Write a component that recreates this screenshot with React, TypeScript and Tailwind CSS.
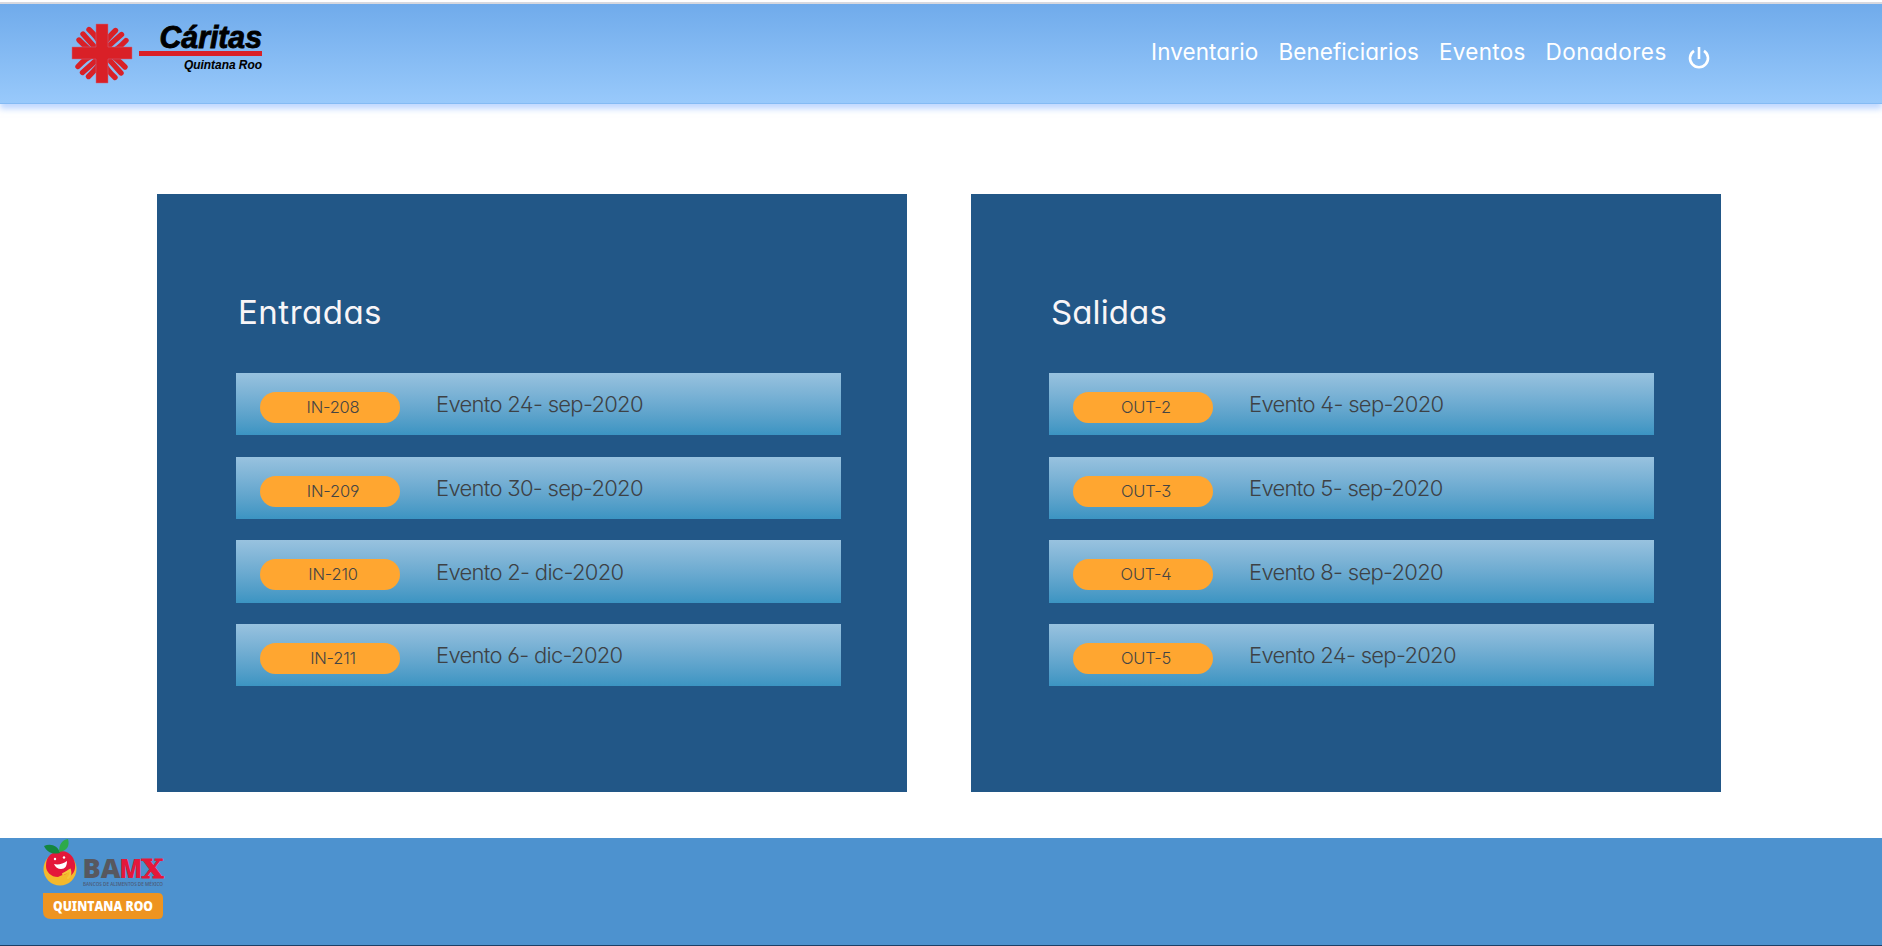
import React from "react";

const uiFont = "font-[Inter,'Open_Sans',sans-serif] [font-feature-settings:'cv11','ss01']";

function CaritasLogo() {
  const arms = [0, 90, 180, 270];
  return (
    <svg className="overflow-visible" width="192" height="60" viewBox="72 24 192 60" aria-label="Cáritas">
      {arms.map((a) => (
        <g key={a} transform={`rotate(${a} 102 53.5)`} fill="none" stroke="#d92027" strokeWidth="5.400" strokeLinecap="round">
          <path d="M106 41Q108 38 115.500 30.500" />
          <path d="M107 47.500Q113 42 121.500 34.500" />
          <path d="M112 51Q117 50 126 40.500" />
        </g>
      ))}
      <path d="M96 24h12v23h24v12h-24v24h-12v-24h-24v-12h24z" fill="#d92027" stroke="#c46b86" strokeWidth="0.500" />
      <path d="M139 51h123v5h-123z" fill="#d92027" />
      <text x="159.500" y="47.600" fontFamily="Liberation Sans" fontSize="31" fontWeight="700" fontStyle="italic" textLength="102.500" lengthAdjust="spacingAndGlyphs" stroke="#000" strokeWidth="0.900">Cáritas</text>
      <text x="184" y="69" fontFamily="Liberation Sans" fontSize="13.500" fontWeight="700" fontStyle="italic" textLength="78" lengthAdjust="spacingAndGlyphs" stroke="#000" strokeWidth="0.100">Quintana Roo</text>
    </svg>
  );
}

function BamxLogo() {
  return (
    <svg className="overflow-visible" width="122" height="82" viewBox="42 838 122 82" aria-label="BAMX">
      <circle cx="60" cy="869" r="16.500" fill="#f4b92c" />
      <path d="M50 855c7-6 20-6 24 5 3 8 0 14-5 17 2-3 2-6 1-8-2 1-3 3-4 5-4 1-6 2-8 3-7 0-12-5-12-11 0-5 1-8 4-11z" fill="#e4173a" />
      <path d="M63 874c3-1 5-3 7-4 1 3 0 6-2 8" fill="none" stroke="#f4c63a" strokeWidth="2" strokeLinecap="round" />
      <path d="M60 853c-8 2-13-1-16-7 6-3 14-1 16 7z" fill="#14863f" />
      <path d="M59 852c0-8 3-12 9-13 2 7-1 12-9 13z" fill="#2daa4a" />
      <path d="M54 864c4 1 9 0 13-3 0 5-2 8-6 8-3 0-6-2-7-5z" fill="#fff" />
      <circle cx="55" cy="859" r="1.200" fill="#fff" />
      <circle cx="64" cy="857.500" r="1.200" fill="#fff" />
      <text x="82.500" y="878" fontFamily="Open Sans" fontSize="27" fontWeight="800" textLength="38" lengthAdjust="spacingAndGlyphs" fill="#57585f">BA</text>
      <text x="119.500" y="878" fontFamily="Open Sans" fontSize="27" fontWeight="800" textLength="22.500" lengthAdjust="spacingAndGlyphs" fill="#e4173a">M</text>
      <text x="141.500" y="878" fontFamily="DejaVu Serif" fontSize="26.500" fontWeight="700" textLength="22" lengthAdjust="spacingAndGlyphs" fill="#e4173a" stroke="#e4173a" strokeWidth="0.900">X</text>
      <text x="83" y="886" fontFamily="Open Sans" fontSize="5" fontWeight="600" textLength="80" lengthAdjust="spacingAndGlyphs" fill="#4c5b78">BANCOS DE ALIMENTOS DE MÉXICO</text>
      <path d="M43 893h115q5 0 5 5v16q0 5-5 5h-107q-8 0-8-8z" fill="#ee9420" />
      <text x="53" y="911" fontFamily="Open Sans" fontSize="14" fontWeight="800" textLength="100" lengthAdjust="spacingAndGlyphs" fill="#fff">QUINTANA ROO</text>
    </svg>
  );
}

function PowerIcon() {
  return (
    <svg width="22" height="22" viewBox="0 0 22 22" fill="none" stroke="#fff" strokeWidth="2.600">
      <path d="M6 3.800a9 9 0 1 0 10 0M11 0v12" />
    </svg>
  );
}

type Entry = { code: string; label: string };

const entradas: Entry[] = [
  { code: "IN-208", label: "Evento 24- sep-2020" },
  { code: "IN-209", label: "Evento 30- sep-2020" },
  { code: "IN-210", label: "Evento 2- dic-2020" },
  { code: "IN-211", label: "Evento 6- dic-2020" },
];

const salidas: Entry[] = [
  { code: "OUT-2", label: "Evento 4- sep-2020" },
  { code: "OUT-3", label: "Evento 5- sep-2020" },
  { code: "OUT-4", label: "Evento 8- sep-2020" },
  { code: "OUT-5", label: "Evento 24- sep-2020" },
];

function Panel({ title, items, inset, heading }: { title: string; items: Entry[]; inset: string; heading: string }) {
  return (
    <section className={`h-[598px] w-[750px] bg-[#225787] pt-[94px] ${inset}`}>
      <h2 className={`pl-[2px] text-[33px] leading-[48px] text-[#f8f5f7] ${heading}`}>{title}</h2>
      <ul className="mt-[37px] flex w-[605px] flex-col gap-[21.2px]">
        {items.map((item) => (
          <li key={item.code} className="flex h-[62.48px] items-start bg-linear-to-b from-[#98c2df] to-[#3b94c2] pl-6">
            <span className="mt-[19px] h-[31px] w-[140px] rounded-[15.5px] bg-[#ffa630] pl-[6px] text-center text-[16.5px] font-light leading-[31.4px] tracking-[-0.2px] text-[#444]">{item.code}</span>
            <span className="ml-[36px] mt-[16.2px] text-[22px] font-light leading-[31px] tracking-[-0.7px] text-[#3d4145]">{item.label}</span>
          </li>
        ))}
      </ul>
    </section>
  );
}

export default function App() {
  return (
    <div className={`flex h-[946px] flex-col overflow-hidden bg-white ${uiFont}`}>
      <div className="mt-[2px] h-[2px] shrink-0 bg-[#d9d9df]" />
      <header className="flex h-[100px] shrink-0 items-start justify-between border-b border-[#84bbf4] bg-linear-to-b from-[#70abeb] to-[#98c9fb] pl-[72px] pr-[172px] pt-[20px] shadow-[0_5px_6px_rgba(150,190,255,0.6)]">
        <CaritasLogo />
        <nav className="flex items-start text-[22.5px] leading-[32px] text-white">
          <a className="mt-[12px] w-[127.5px] tracking-[0.1px]">Inventario</a>
          <a className="mt-[12px] w-[160.5px] tracking-[0.05px]">Beneficiarios</a>
          <a className="mt-[12px] w-[106.5px] tracking-[0.3px]">Eventos</a>
          <a className="mt-[12px] w-[142.5px] tracking-[0.45px]">Donadores</a>
          <a className="mt-[23px]"><PowerIcon /></a>
        </nav>
      </header>
      <main className="flex h-[734px] shrink-0 gap-[64px] pl-[157px] pt-[90px]">
        <Panel title="Entradas" items={entradas} inset="pl-[79px]" heading="tracking-[0.5px]" />
        <Panel title="Salidas" items={salidas} inset="pl-[78px]" heading="tracking-[0.1px]" />
      </main>
      <footer className="h-[108px] shrink-0 border-b border-[#1d3f66] bg-[#4d92cf] pl-[42px]">
        <BamxLogo />
      </footer>
    </div>
  );
}
